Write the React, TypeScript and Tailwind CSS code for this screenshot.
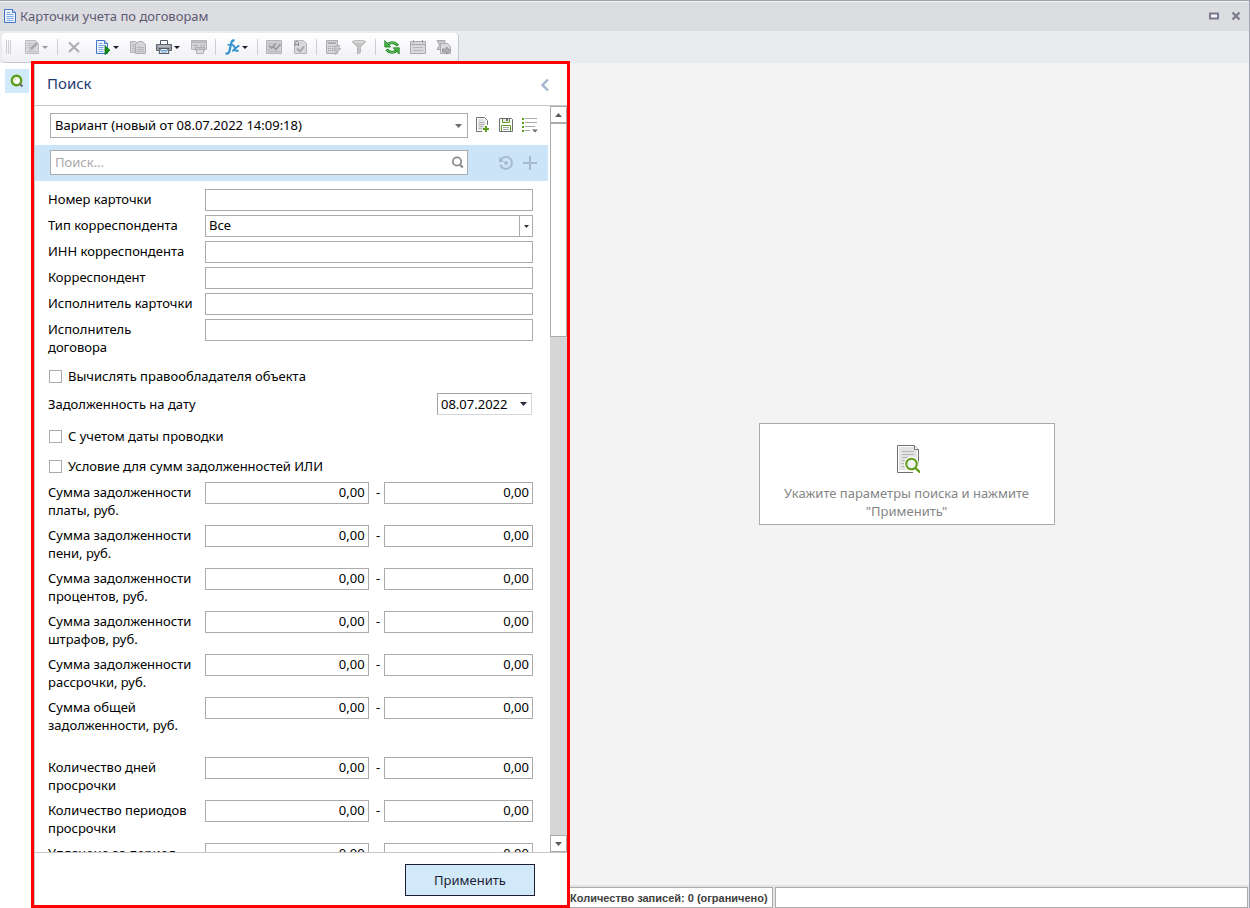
import React, { useState } from 'react'

const sumRows = [
  'Сумма задолженности\nплаты, руб.',
  'Сумма задолженности\nпени, руб.',
  'Сумма задолженности\nпроцентов, руб.',
  'Сумма задолженности\nштрафов, руб.',
  'Сумма задолженности\nрассрочки, руб.',
  'Сумма общей\nзадолженности, руб.',
]

const countRows = ['Количество дней\nпросрочки', 'Количество периодов\nпросрочки', 'Уплачено за период']

/* ── Icons ── */

function Icon({ size = 16, children }: { size?: number; children: React.ReactNode }) {
  return (
    <svg width={size} height={size} viewBox={`0 0 ${size} ${size}`} fill="none" className="block shrink-0" aria-hidden="true">
      {children}
    </svg>
  )
}

function Caret({ className }: { className: string }) {
  return (
    <svg width="7" height="4" viewBox="0 0 7 4" className={`block shrink-0 ${className}`} aria-hidden="true">
      <path d="M0 0h7L3.5 4z" fill="currentColor" />
    </svg>
  )
}

const DocBlue = () => (
  <Icon>
    <path d="M2.5 1.5h8l3 3v10h-11z" fill="#eef5ff" stroke="#4173c9" />
    <path d="M10.5 1.5v3h3" fill="#bcd5f8" stroke="#4173c9" />
    <path d="M4.5 4.5h4M4.5 6.5h7M4.5 8.5h7M4.5 10.5h7M4.5 12.5h7" stroke="#7ba7e6" />
  </Icon>
)

const EditGray = () => (
  <Icon>
    <path d="M1.5 1.5h10l3 3v10h-13z" fill="#d9d9db" stroke="#bdbdbf" />
    <path d="M3.5 4.5h5M3.5 6.5h4M3.5 8.5h3M3.5 12.5h9" stroke="#c0c0c2" />
    <path d="M5 12l1-3 6-6 2 2-6 6z" fill="#a8a8aa" />
    <path d="M5.8 11.4l.6-1.6 1.2 1.2z" fill="#eee" />
  </Icon>
)

const CrossGray = () => (
  <Icon>
    <path d="M3 3.5l10 9.5M13 3.5L3 13" stroke="#acacae" strokeWidth="2" />
  </Icon>
)

const DocRun = () => (
  <Icon>
    <path d="M1.5 1.5h8l3 3v10h-11z" fill="#eef5ff" stroke="#4173c9" />
    <path d="M9.5 1.5v3h3" fill="#bcd5f8" stroke="#4173c9" />
    <path d="M3.5 4.5h4M3.5 6.5h7M3.5 8.5h5M3.5 10.5h5M3.5 12.5h5" stroke="#7ba7e6" />
    <path d="M10 6.8l5 4.400-5 4.500z" fill="#0f8f12" stroke="#06690a" strokeWidth=".7" />
  </Icon>
)

const CopyGray = () => (
  <Icon>
    <path d="M.5 2.5h5l3 2v9h-8z" fill="#d4d4d6" stroke="#b2b2b4" />
    <path d="M2 5.5h4M2 7.5h3M2 9.5h3M2 11.5h3" stroke="#bcbcbe" />
    <path d="M5.5 5.5l3-3h4l3 3v9h-10z" fill="#d4d4d6" stroke="#adadaf" />
    <path d="M7 8.500h7M7 10.500h7M7 12.500h7" stroke="#b6b6b8" />
  </Icon>
)

const Printer = () => (
  <Icon>
    <path d="M4.5 1.5h7v5h-7z" fill="#fff" stroke="#515a66" />
    <path d="M.5 5.500h15v6H.5z" fill="#9ba1a9" stroke="#5b636e" />
    <path d="M2 7h12" stroke="#c9cdd2" />
    <path d="M3 9.5h10" stroke="#383f49" />
    <path d="M4.5 9.5h7l1.500 5h-10z" fill="#eaf3fb" stroke="#515a66" />
    <path d="M5 11.5h6M5 13h6" stroke="#6ea3d3" />
  </Icon>
)

const DeviceGray = () => (
  <Icon>
    <path d="M.5 1.500h15v9H.5z" fill="#d4d4d6" stroke="#b4b4b6" />
    <path d="M1 3h14" stroke="#bdbdbf" strokeWidth="2" />
    <path d="M2 6.500h5M10 5v4M13 5v4" stroke="#aeaeb0" />
    <path d="M4.500 8.500h9v3h-9z" fill="#c2c2c4" stroke="#adadaf" />
    <path d="M5.500 10.500h7v4h-7z" fill="#dededf" stroke="#b2b2b4" />
  </Icon>
)

const FxBlue = () => (
  <Icon>
    <path d="M10.500 1.800C8.200.6 7.400 3 6.900 5.500L5.600 11.500C5.100 14 3.800 15.300 1.500 14.300" stroke="#3391cd" strokeWidth="2.200" />
    <path d="M3.500 5.800h6" stroke="#3391cd" strokeWidth="1.500" />
    <path d="M8.500 6.800c2.300-.6 2 1.700 2.500 3.300.4 1.800 1.300 2.200 3.500 1.200M15.300 6.800c-2.200 0-3.500 3-7 5.400" stroke="#3391cd" strokeWidth="1.900" />
  </Icon>
)

const ChecksGray = () => (
  <Icon>
    <path d="M.5 1.500h15v13H.5z" fill="#cfcfd1" stroke="#b4b4b6" />
    <path d="M2 4.500h5M2 10.500h2M2 12.500h12" stroke="#b6b6b8" />
    <path d="M3 6.500l2.500 2.500L10 4.500M7.500 8l2.500 2.500L14.500 5" stroke="#9c9c9e" strokeWidth="1.800" />
  </Icon>
)

const DocCheckGray = () => (
  <Icon>
    <path d="M2.500 1.500h9l3 3v10h-12z" fill="#d8d8da" stroke="#b6b6b8" />
    <path d="M3 7V4C3 1.800 6.500 1.800 6.500 4V7M3 5.500h3.500" stroke="#8d8d8f" />
    <path d="M5 9.500l3 3 4-5" stroke="#a2a2a4" strokeWidth="1.800" />
  </Icon>
)

const CalcGray = () => (
  <Icon>
    <path d="M1.500 1.500h11v13h-11z" fill="#d6d6d8" stroke="#adadaf" />
    <path d="M3 4h8" stroke="#aeaeb0" strokeWidth="2" />
    <path d="M3 7.500h8M3 9.500h8M3 11.500h8" stroke="#a0a0a2" strokeDasharray="1 1" />
    <path d="M11 6.500h4l-2 3h3l-6 6 1.500-4h-2.500z" fill="#c8c8ca" stroke="#a9a9ab" strokeWidth=".7" />
  </Icon>
)

const FunnelGray = () => (
  <Icon>
    <path d="M1.500 2.500c0-1.300 13-1.300 13 0 0 2-5 4-5 6v5l-3 1.500v-6.500c0-2-5-4-5-6z" fill="#c2c2c4" stroke="#adadaf" strokeWidth=".8" />
    <ellipse cx="8" cy="3" rx="5" ry="1" fill="#dcdcde" />
  </Icon>
)

const RefreshGreen = () => (
  <Icon>
    <path d="M3 6C6 2.800 10 2.500 14 6.500" stroke="#14801a" strokeWidth="2.800" />
    <path d="M3 6C6 3 10 2.800 13.500 6" stroke="#8fdc84" />
    <path d="M.8 1.500v6.500h6z" fill="#4db347" stroke="#14801a" strokeWidth=".8" />
    <path d="M13 11C10 14.200 6 14.500 2.500 10.500" stroke="#14801a" strokeWidth="2.800" />
    <path d="M13 11C10 14 6 14.200 3 11" stroke="#8fdc84" />
    <path d="M15.200 15V8.800h-6z" fill="#4db347" stroke="#14801a" strokeWidth=".8" />
  </Icon>
)

const CalendarGray = () => (
  <Icon>
    <path d="M.5 2.500h15v12H.5z" fill="#dadadc" stroke="#a9a9ab" />
    <path d="M1 5.500h14" stroke="#a5a5a7" />
    <path d="M3.500 1v3M12.500 1v3" stroke="#a0a0a2" />
    <path d="M3 8.500h10M3 11.500h10" stroke="#b6b6b8" />
  </Icon>
)

const ExportGray = () => (
  <Icon>
    <path d="M1 1.500h8v9H1l2.500-4.500z" fill="#c9c9cb" stroke="#a9a9ab" />
    <path d="M4.500 4.500h7l3 3v7h-10z" fill="#dadadc" stroke="#adadaf" />
    <path d="M6.500 10h4V8l4 3.500-4 3.500v-2h-4z" fill="#b2b2b4" stroke="#8d8d8f" strokeWidth=".8" />
  </Icon>
)

const SearchGreen = () => (
  <Icon>
    <circle cx="7.500" cy="7.500" r="4.700" fill="#fff" stroke="#5f9e1b" strokeWidth="2.400" />
    <path d="M5.500 7.500c0-1 .8-2 2-2" stroke="#a9cf7d" />
    <path d="M11 11l2.500 2.500" stroke="#6b6b72" strokeWidth="2.200" />
  </Icon>
)

/* ── Toolbar parts ── */

type ToolProps = { label: string; menu?: boolean; off?: boolean; wide?: boolean; children: React.ReactNode }

function Tool({ label, menu, off, wide, children }: ToolProps) {
  const width = menu ? 'w-[35px] gap-0.5 pl-[5px]' : wide ? 'w-[29px] pl-[5px]' : 'w-[26px] justify-center'
  return (
    <button type="button" aria-label={label} title={label} disabled={off} className={`flex h-6 items-center ${width}`}>
      {children}
      {menu && (
        <svg width="6" height="3" viewBox="0 0 6 3" className={`block ${off ? 'text-[#9a9aa0]' : 'text-[#1c1c2a]'}`}>
          <path d="M0 0h6L3 3z" fill="currentColor" />
        </svg>
      )}
    </button>
  )
}

const Separator = () => <span className="mx-[3px] h-4 w-px bg-[#cdced6]" />

/* ── Form parts ── */

const inputClass = 'h-[22px] min-w-0 border border-[#ababab] bg-white px-[3px] pb-0.5 text-[13px] text-black outline-none'

function TextRow({ id, label }: { id: string; label: string }) {
  return (
    <div className="flex items-start">
      <label htmlFor={id} className="w-[157px] shrink-0 whitespace-pre-line pt-px">{label}</label>
      <input id={id} type="text" className={`flex-1 ${inputClass}`} />
    </div>
  )
}

function RangeRow({ id, label }: { id: string; label: string }) {
  return (
    <div className="flex h-[43px] items-start">
      <label htmlFor={id} className="w-[157px] shrink-0 whitespace-pre-line pt-px">{label}</label>
      <input id={id} type="text" defaultValue="0,00" className={`flex-[164] text-right ${inputClass}`} />
      <span className="w-[15px] pl-1 pt-px text-center">-</span>
      <input type="text" defaultValue="0,00" aria-label={`${label} до`} className={`flex-[149] text-right ${inputClass}`} />
    </div>
  )
}

function CheckRow({ label }: { label: string }) {
  const [on, setOn] = useState(false)
  return (
    <label className="flex h-[30px] items-center gap-1.5 pl-px">
      <input
        type="checkbox"
        checked={on}
        onChange={e => setOn(e.target.checked)}
        className="size-[13px] appearance-none border border-[#ababab] bg-white checked:bg-[#5f9e1b]"
      />
      {label}
    </label>
  )
}

function SearchPanel() {
  return (
    <section className="relative -mt-0.5 flex min-h-0 w-[539px] shrink-0 flex-col border-[3px] border-[#fe0000] bg-white">
      <div className="flex min-h-0 flex-1 flex-col border-l border-[#c6c6c6]">
        <header className="flex h-[42px] shrink-0 items-center justify-between border-b border-[#c6c6c6] pb-1 pl-3 pr-4">
          <h2 className="text-[15px] text-[#1f3a73]">Поиск</h2>
          <button type="button" aria-label="Свернуть" className="pt-1">
            <svg width="12" height="14" viewBox="0 0 12 14" fill="none" className="block">
              <path d="M9 1.500L3.500 7 9 12.500" stroke="#a3b5cf" strokeWidth="2.400" />
            </svg>
          </button>
        </header>

        <div className="flex min-h-0 flex-1">
          <div className="mr-0.5 min-w-0 flex-1 overflow-hidden">
            {/* Saved variants */}
            <div className="flex h-[39px] items-center pl-[15px]">
              <div className="relative w-[418px]">
                <select aria-label="Вариант" className="block h-[25px] w-full appearance-none border border-[#ababab] bg-white px-1 pb-0.5 text-[13px] outline-none">
                  <option>Вариант (новый от 08.07.2022 14:09:18)</option>
                </select>
                <Caret className="pointer-events-none absolute right-1.5 top-[11px] text-[#6b6b72]" />
              </div>
              <div className="flex gap-2 pb-0.5 pl-1.5">
                <button type="button" aria-label="Новый вариант">
                  <Icon>
                    <path d="M8 14.500H2.500V.5h8l3 3V8" fill="#fff" stroke="#6f7076" />
                    <path d="M4 2h6l2 2v3l-3 6H4z" fill="#e3e3e3" />
                    <path d="M5 5.500h5M5 7.500h5M5 9.500h4M5 11.500h3" stroke="#b4b4b6" />
                    <path d="M12 9v6M9 12h6" stroke="#5f9e1b" strokeWidth="2" />
                  </Icon>
                </button>
                <button type="button" aria-label="Сохранить">
                  <Icon>
                    <path d="M1.500 1.500h12l1 1v12h-13z" fill="#fff" stroke="#6f7076" />
                    <path d="M4.500 2v3.500h7V2" fill="#e8e8e8" stroke="#5f9e1b" />
                    <path d="M8 2h2v2H8z" fill="#6f7076" />
                    <path d="M3.500 14V8.500h9V14" fill="#fff" stroke="#5f9e1b" />
                    <path d="M5 10.500h6M5 12.500h6" stroke="#a9a9ab" />
                  </Icon>
                </button>
                <button type="button" aria-label="Список вариантов">
                  <Icon>
                    <path d="M0 2h2M0 6h2M0 10h2M0 14h2" stroke="#5f9e1b" strokeWidth="2" />
                    <path d="M3 1.500h12M3 5.500h12M3 9.500h10M3 13.500h5" stroke="#a9a9ab" />
                    <path d="M10 12.500h6l-3 3z" fill="#6b6b72" />
                  </Icon>
                </button>
              </div>
            </div>

            {/* Quick search */}
            <div className="flex h-9 items-center bg-[#cce4f7] pb-px pl-[15px]">
              <div className="relative w-[418px]">
                <input
                  type="search"
                  aria-label="Поиск по параметрам"
                  placeholder="Поиск..."
                  className="block h-[25px] w-full appearance-none border border-[#ababab] bg-white px-1 pb-0.5 text-[13px] outline-none placeholder:text-[#a8a8a8]"
                />
                <svg width="13" height="13" viewBox="0 0 13 13" fill="none" className="pointer-events-none absolute right-1 top-1.5">
                  <circle cx="6" cy="5.500" r="4.200" stroke="#8c8c8c" strokeWidth="1.800" />
                  <path d="M8.800 8.500l3 3" stroke="#8c8c8c" strokeWidth="2.200" />
                </svg>
              </div>
              <div className="flex gap-2 pl-[30px]">
                <button type="button" aria-label="Сбросить">
                  <Icon>
                    <path d="M2.600 5A6 6 0 1 1 2.100 9.500" stroke="#a9b9d2" strokeWidth="2" />
                    <path d="M1 2v5h5z" fill="#a9b9d2" />
                    <circle cx="8" cy="8" r="2" fill="#a9b9d2" />
                  </Icon>
                </button>
                <button type="button" aria-label="Добавить">
                  <Icon>
                    <path d="M8 1v14M1 8h14" stroke="#a9b9d2" strokeWidth="2" />
                  </Icon>
                </button>
              </div>
            </div>

            {/* Parameters */}
            <form className="flex flex-col pl-[13px] pr-[15px] pt-2 leading-[18px]">
              <div className="flex flex-col gap-1">
                <TextRow id="card-number" label="Номер карточки" />
                <div className="flex items-start">
                  <label htmlFor="partner-type" className="w-[157px] shrink-0 pt-px">Тип корреспондента</label>
                  <div className="relative flex-1">
                    <select id="partner-type" className={`block w-full appearance-none ${inputClass}`}>
                      <option>Все</option>
                    </select>
                    <span className="pointer-events-none absolute inset-y-0 right-0 flex w-3.5 items-center justify-center border border-[#ababab]">
                      <svg width="5" height="3" viewBox="0 0 5 3"><path d="M0 0h5L2.500 3z" fill="#333" /></svg>
                    </span>
                  </div>
                </div>
                <TextRow id="partner-inn" label="ИНН корреспондента" />
                <TextRow id="partner" label="Корреспондент" />
                <TextRow id="card-executor" label="Исполнитель карточки" />
                <TextRow id="contract-executor" label={'Исполнитель\nдоговора'} />
              </div>

              <div className="flex flex-col pb-px pt-[5px]">
                <CheckRow label="Вычислять правообладателя объекта" />
                <div className="flex h-[30px] items-start justify-between pr-px pt-0.5">
                  <label htmlFor="debt-date" className="pt-0.5">Задолженность на дату</label>
                  <div className="flex h-[22px] w-[95px] items-center border border-[#d5d5dc] border-l-[#a3a3ae] border-t-[#a3a3ae]">
                    <input id="debt-date" type="text" defaultValue="08.07.2022" className="min-w-0 flex-1 pl-[3px] text-[13px] outline-none" />
                    <button type="button" aria-label="Выбрать дату" className="flex h-full w-4 items-center justify-center">
                      <Caret className="text-[#2b2b40]" />
                    </button>
                  </div>
                </div>
                <CheckRow label="С учетом даты проводки" />
                <CheckRow label="Условие для сумм задолженностей ИЛИ" />
              </div>

              <div className="flex flex-col">
                {sumRows.map((label, i) => <RangeRow key={label} id={`sum-${i}`} label={label} />)}
              </div>
              <div className="flex flex-col pt-[17px]">
                {countRows.map((label, i) => <RangeRow key={label} id={`count-${i}`} label={label} />)}
              </div>
            </form>
          </div>

          {/* Scroll bar */}
          <div className="flex w-[17px] flex-col bg-[#d6d6d6]">
            <button type="button" aria-label="Вверх" className="flex h-[17px] items-center justify-center border border-[#ababab] bg-white">
              <Caret className="rotate-180 text-[#5a5a5a]" />
            </button>
            <div className="h-[214px] border border-[#ababab] bg-white" />
            <button type="button" aria-label="Вниз" className="mt-auto flex h-[17px] items-center justify-center border border-[#ababab] bg-white">
              <Caret className="text-[#5a5a5a]" />
            </button>
          </div>
        </div>

        <footer className="flex h-[53px] shrink-0 items-center justify-end border-t border-[#c6c6c6] pr-8 pt-0.5">
          <button type="button" className="h-8 w-[130px] border border-[#1d1d38] bg-[#d1e9f9] text-[#1d1d38]">Применить</button>
        </footer>
      </div>
    </section>
  )
}

export default function App() {
  return (
    <div className="flex h-screen flex-col border-r border-t border-[#a2a2b0] bg-[#f3f3f3] font-['Noto_Sans','Open_Sans',sans-serif] text-[13px] leading-[18px] text-black">
      {/* Title bar */}
      <header className="flex h-[30px] shrink-0 items-center justify-between border-t border-[#f2f2f5] bg-[#dcdde1] pb-0.5 pl-0.5 pr-2">
        <div className="flex items-center gap-0.5">
          <DocBlue />
          <h1 className="text-[13px] text-[#5e5a72]">Карточки учета по договорам</h1>
        </div>
        <div className="flex items-center gap-3">
          <button type="button" aria-label="Развернуть">
            <svg width="10" height="8" viewBox="0 0 10 8" className="block"><path d="M1 1.500h8v5H1z" fill="#f2f2f5" stroke="#7d7b8f" strokeWidth="2" /></svg>
          </button>
          <button type="button" aria-label="Закрыть">
            <svg width="10" height="10" viewBox="0 0 10 10" className="block"><path d="M1.500 1.500l7 7M8.500 1.500l-7 7" stroke="#7d7b8f" strokeWidth="2.400" /></svg>
          </button>
        </div>
      </header>

      {/* Toolbar */}
      <div className="flex h-8 shrink-0 bg-[#e9ebef] pl-0.5 pt-0.5">
        <div className="flex items-center rounded-sm border-b border-r border-[#c6c8d0] bg-linear-to-b from-white to-[#eff0f4] pb-px pr-px">
          <span className="ml-1 mr-2 flex h-3.5 w-[5px] justify-between border-x border-[#cdced6]"><span className="mx-auto w-px bg-[#cdced6]" /></span>
          <Tool label="Редактировать" menu off><EditGray /></Tool>
          <Separator />
          <Tool label="Удалить" off wide><CrossGray /></Tool>
          <Tool label="Сформировать" menu><DocRun /></Tool>
          <Tool label="Копировать" off><CopyGray /></Tool>
          <Tool label="Печать" menu><Printer /></Tool>
          <Tool label="Касса" off><DeviceGray /></Tool>
          <Separator />
          <Tool label="Функции" menu><FxBlue /></Tool>
          <Separator />
          <Tool label="Отметить" off><ChecksGray /></Tool>
          <Tool label="Проверить" off><DocCheckGray /></Tool>
          <Separator />
          <Tool label="Рассчитать" off><CalcGray /></Tool>
          <Tool label="Фильтр" off><FunnelGray /></Tool>
          <Separator />
          <Tool label="Обновить"><RefreshGreen /></Tool>
          <Tool label="Календарь" off><CalendarGray /></Tool>
          <Tool label="Экспорт" off><ExportGray /></Tool>
        </div>
      </div>

      <div className="flex min-h-0 flex-1">
        <aside className="w-[31px] shrink-0 bg-white pl-[5px] pt-1.5">
          <button type="button" aria-label="Поиск" className="flex size-6 items-center justify-center bg-[#d1eaf9]">
            <SearchGreen />
          </button>
        </aside>

        <SearchPanel />

        <main className="flex min-w-0 flex-1 flex-col">
          <div className="flex flex-1 items-center justify-center pr-1.5">
            <div className="flex w-[296px] flex-col items-center gap-2.5 border border-[#ababab] bg-white px-5 pb-1 pt-5 text-center text-[#858585]">
              <svg width="26" height="30" viewBox="-2 0 26 30" fill="none">
                <path d="M17 28.500H1.500v-27h17l4 4V22" fill="#fff" stroke="#6f7076" />
                <path d="M3 3h15l3 3v20H3z" fill="#e3e3e3" />
                <path d="M18.500 1.500v4h4" fill="#fff" stroke="#6f7076" />
                <path d="M6 7.500h12M6 10.500h12M6 13.500h6M6 16.500h3M6 19.500h2M6 22.500h3" stroke="#b4b4b6" />
                <circle cx="15.500" cy="20" r="7.500" fill="#fff" />
                <circle cx="15.500" cy="20" r="5.300" fill="#f2f2f2" stroke="#5f9e1b" strokeWidth="2" />
                <path d="M19 23.500l5 5" stroke="#5f9e1b" strokeWidth="2.400" />
              </svg>
              <p>Укажите параметры поиска и нажмите<br />"Применить"</p>
            </div>
          </div>
          <footer className="flex h-[23px] shrink-0 gap-0.5 border-t-2 border-[#e4e4e4] bg-[#e4e4e4] pr-px">
            <div className="w-[203px] shrink-0 whitespace-nowrap border border-l-0 border-[#ababab] bg-white font-['Liberation_Sans',Arial,sans-serif] text-[11px] font-bold leading-5 text-[#404040]">
              Количество записей: 0 (ограничено)
            </div>
            <div className="flex-1 border border-[#ababab] bg-white" />
          </footer>
        </main>
      </div>
    </div>
  )
}
